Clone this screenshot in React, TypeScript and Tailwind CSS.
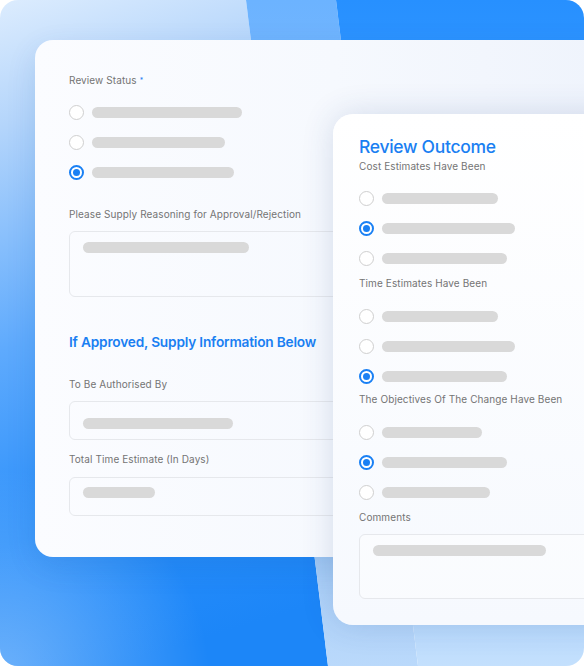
import React from 'react';

type Row = { width: number; checked?: boolean };

function Radio({ checked }: { checked?: boolean }) {
  if (checked) {
    return (
      <span className="flex h-[15px] w-[15px] shrink-0 items-center justify-center rounded-full border-2 border-[#1a80f4] bg-white">
        <span className="h-[7px] w-[7px] rounded-full bg-[#1a80f4]" />
      </span>
    );
  }
  return <span className="h-[15px] w-[15px] shrink-0 rounded-full border-[1.5px] border-[#cfcfcf] bg-white" />;
}

function RadioGroup({ rows }: { rows: Row[] }) {
  return (
    <div className="flex flex-col">
      {rows.map((r, i) => (
        <div key={i} className="flex h-[30px] items-center gap-[8px]">
          <Radio checked={r.checked} />
          <span className="h-[11px] rounded-full bg-[#d9d9d9]" style={{ width: r.width }} />
        </div>
      ))}
    </div>
  );
}

function Label({ children, className = '' }: { children: React.ReactNode; className?: string }) {
  return <div className={`text-[10px] leading-[14px] tracking-[0.1px] text-[#747474] ${className}`}>{children}</div>;
}

function Backdrop() {
  return (
    <svg className="absolute inset-0 h-full w-full" viewBox="0 0 584 666" preserveAspectRatio="none">
      <defs>
        <linearGradient id="ga" gradientUnits="userSpaceOnUse" x1="0" y1="0" x2="200" y2="640">
          <stop offset="0" stopColor="#dcecfe" />
          <stop offset="0.18" stopColor="#b4d5fb" />
          <stop offset="0.5" stopColor="#5eaafd" />
          <stop offset="0.78" stopColor="#2a8ffb" />
          <stop offset="1" stopColor="#1c86f8" />
        </linearGradient>
        <radialGradient id="gcorner" gradientUnits="userSpaceOnUse" cx="0" cy="680" r="210">
          <stop offset="0" stopColor="#ffffff" stopOpacity="0.35" />
          <stop offset="1" stopColor="#ffffff" stopOpacity="0" />
        </radialGradient>
        <linearGradient id="gb" gradientUnits="userSpaceOnUse" x1="0" y1="0" x2="0" y2="666">
          <stop offset="0" stopColor="#6cb3ff" />
          <stop offset="0.6" stopColor="#8fc0f5" />
          <stop offset="1" stopColor="#bad9fb" />
        </linearGradient>
        <linearGradient id="gc" gradientUnits="userSpaceOnUse" x1="0" y1="0" x2="0" y2="666">
          <stop offset="0" stopColor="#2790ff" />
          <stop offset="0.25" stopColor="#3a9bff" />
          <stop offset="1" stopColor="#c4e0fd" />
        </linearGradient>
      </defs>
      <polygon points="0,0 246,0 328,666 0,666" fill="url(#ga)" />
      <polygon points="0,0 246,0 328,666 0,666" fill="url(#gcorner)" />
      <polygon points="246,0 336,0 418,666 328,666" fill="url(#gb)" />
      <polygon points="336,0 584,0 584,666 418,666" fill="url(#gc)" />
    </svg>
  );
}

export default function App() {
  return (
    <div className="bg-white" style={{ fontFamily: 'Inter, "Noto Sans", sans-serif' }}>
      <div className="relative h-[666px] w-[584px] overflow-hidden rounded-[18px]">
        <Backdrop />

        {/* Left card: review status form */}
        <div className="relative ml-[35px] mt-[40px] h-[517px] w-[600px] rounded-[18px] bg-gradient-to-r from-[#fbfcff] via-[#f6f9fe] to-[#eef3fc] pl-[34px] pt-[33px] shadow-[0_10px_30px_rgba(20,70,150,0.12)]">
          <Label>
            Review Status <span className="relative -top-[1px] text-[7px] text-[#1a80f4]">*</span>
          </Label>
          <div className="mt-[8px]">
            <RadioGroup rows={[{ width: 150 }, { width: 133 }, { width: 142, checked: true }]} />
          </div>

          <Label className="mt-[20px]">Please Supply Reasoning for Approval/Rejection</Label>
          <div className="mt-[10px] h-[66px] w-[320px] rounded-[6px] border border-[#e6e8ec] pl-[13px] pt-[10px]">
            <div className="h-[11px] w-[166px] rounded-full bg-[#d9d9d9]" />
          </div>

          <div className="mt-[35px] text-[13.7px] font-semibold leading-[20px] tracking-[-0.2px] text-[#1a7ff2]">
            If Approved, Supply Information Below
          </div>

          <Label className="mt-[25px]">To Be Authorised By</Label>
          <div className="mt-[10px] h-[39px] w-[320px] rounded-[6px] border border-[#e6e8ec] pl-[13px] pt-[16px]">
            <div className="h-[11px] w-[150px] rounded-full bg-[#d9d9d9]" />
          </div>

          <Label className="mt-[12px]">Total Time Estimate (In Days)</Label>
          <div className="mt-[11px] h-[39px] w-[320px] rounded-[6px] border border-[#e6e8ec] pl-[13px] pt-[9px]">
            <div className="h-[11px] w-[72px] rounded-full bg-[#d9d9d9]" />
          </div>
        </div>

        {/* Right card: review outcome, lies over the left card */}
        <div className="absolute left-[333px] top-[114px] h-[511px] w-[300px] rounded-[20px] bg-gradient-to-b from-white to-[#f6f9fe] pl-[26px] pt-[22px] shadow-[0_0_32px_rgba(40,70,130,0.16)]">
          <div className="text-[17.5px] font-medium leading-[22px] tracking-[-0.3px] text-[#1a7ff2]">Review Outcome</div>

          <Label className="mt-[1px]">Cost Estimates Have Been</Label>
          <div className="mt-[10px]">
            <RadioGroup rows={[{ width: 116 }, { width: 133, checked: true }, { width: 125 }]} />
          </div>

          <Label className="mt-[3px]">Time Estimates Have Been</Label>
          <div className="mt-[11px]">
            <RadioGroup rows={[{ width: 116 }, { width: 133 }, { width: 125, checked: true }]} />
          </div>

          <Label className="mt-[1px]">The Objectives Of The Change Have Been</Label>
          <div className="mt-[11px]">
            <RadioGroup rows={[{ width: 100 }, { width: 125, checked: true }, { width: 108 }]} />
          </div>

          <Label className="mt-[3px]">Comments</Label>
          <div className="mt-[10px] h-[65px] w-[260px] rounded-[6px] border border-[#e6e8ec] bg-white/40 pl-[13px] pt-[10px]">
            <div className="h-[11px] w-[173px] rounded-full bg-[#d9d9d9]" />
          </div>
        </div>
      </div>
    </div>
  );
}
